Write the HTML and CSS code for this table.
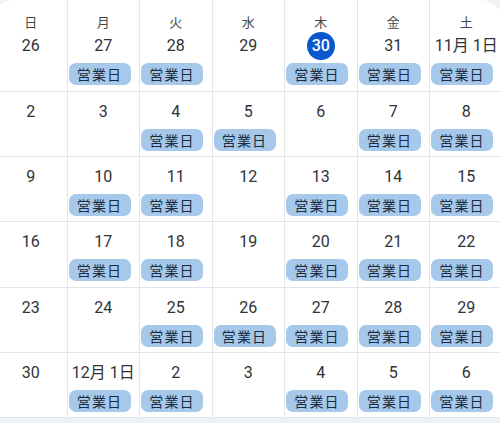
FILE: index.html
```html
<!DOCTYPE html>
<html lang="ja">
<head>
<meta charset="utf-8">
<title>カレンダー</title>
<link rel="stylesheet" href="styles.css">
</head>
<body>
<div class="page">
  <div class="cal">
    <div class="cell head"><span class="dow">日</span><span class="date">26</span></div>
    <div class="cell head"><span class="dow">月</span><span class="date">27</span><span class="ev">営業日</span></div>
    <div class="cell head"><span class="dow">火</span><span class="date">28</span><span class="ev">営業日</span></div>
    <div class="cell head"><span class="dow">水</span><span class="date">29</span></div>
    <div class="cell head"><span class="dow">木</span><span class="date today">30</span><span class="ev">営業日</span></div>
    <div class="cell head"><span class="dow">金</span><span class="date">31</span><span class="ev">営業日</span></div>
    <div class="cell head last"><span class="dow">土</span><span class="date">11月 1日</span><span class="ev">営業日</span></div>

    <div class="cell"><span class="date">2</span></div>
    <div class="cell"><span class="date">3</span></div>
    <div class="cell"><span class="date">4</span><span class="ev">営業日</span></div>
    <div class="cell"><span class="date">5</span><span class="ev">営業日</span></div>
    <div class="cell"><span class="date">6</span></div>
    <div class="cell"><span class="date">7</span><span class="ev">営業日</span></div>
    <div class="cell last"><span class="date">8</span><span class="ev">営業日</span></div>

    <div class="cell"><span class="date">9</span></div>
    <div class="cell"><span class="date">10</span><span class="ev">営業日</span></div>
    <div class="cell"><span class="date">11</span><span class="ev">営業日</span></div>
    <div class="cell"><span class="date">12</span></div>
    <div class="cell"><span class="date">13</span><span class="ev">営業日</span></div>
    <div class="cell"><span class="date">14</span><span class="ev">営業日</span></div>
    <div class="cell last"><span class="date">15</span><span class="ev">営業日</span></div>

    <div class="cell"><span class="date">16</span></div>
    <div class="cell"><span class="date">17</span><span class="ev">営業日</span></div>
    <div class="cell"><span class="date">18</span><span class="ev">営業日</span></div>
    <div class="cell"><span class="date">19</span></div>
    <div class="cell"><span class="date">20</span><span class="ev">営業日</span></div>
    <div class="cell"><span class="date">21</span><span class="ev">営業日</span></div>
    <div class="cell last"><span class="date">22</span><span class="ev">営業日</span></div>

    <div class="cell"><span class="date">23</span></div>
    <div class="cell"><span class="date">24</span></div>
    <div class="cell"><span class="date">25</span><span class="ev">営業日</span></div>
    <div class="cell"><span class="date">26</span><span class="ev">営業日</span></div>
    <div class="cell"><span class="date">27</span><span class="ev">営業日</span></div>
    <div class="cell"><span class="date">28</span><span class="ev">営業日</span></div>
    <div class="cell last"><span class="date">29</span><span class="ev">営業日</span></div>

    <div class="cell"><span class="date">30</span></div>
    <div class="cell"><span class="date">12月 1日</span><span class="ev">営業日</span></div>
    <div class="cell"><span class="date">2</span><span class="ev">営業日</span></div>
    <div class="cell"><span class="date">3</span></div>
    <div class="cell"><span class="date">4</span><span class="ev">営業日</span></div>
    <div class="cell"><span class="date">5</span><span class="ev">営業日</span></div>
    <div class="cell last"><span class="date">6</span><span class="ev">営業日</span></div>
  </div>
</div>
</body>
</html>
```

FILE: styles.css
```css
html, body {
  margin: 0;
  padding: 0;
}
body {
  width: 500px;
  height: 423px;
  overflow: hidden;
  background: #eef1f6;
  font-family: Roboto, "Noto Sans CJK JP", sans-serif;
}
.page {
  width: 500px;
  height: 423px;
  overflow: hidden;
}
.cal {
  margin-left: -5px;
  width: 507.5px;
  display: grid;
  grid-template-columns: repeat(7, 72.5px);
  grid-template-rows: 92px repeat(5, 65.2px);
  background: #ffffff;
  border-radius: 18px 22px 0 0;
}
.cell {
  display: flex;
  flex-direction: column;
  align-items: center;
  border-right: 1px solid #e3e5e8;
  border-bottom: 1px solid #e3e5e8;
  min-width: 0;
}
.cell.last {
  border-right: none;
}
.dow {
  margin-top: 14px;
  height: 16px;
  line-height: 16px;
  font-size: 13px;
  font-weight: 400;
  color: #444746;
  font-family: "Noto Sans CJK JP", sans-serif;
}
.date {
  margin-top: 6px;
  height: 28px;
  line-height: 28px;
  min-width: 28px;
  text-align: center;
  font-size: 16px;
  font-weight: 400;
  color: #303336;
  white-space: nowrap;
  font-family: Roboto, "Noto Sans CJK JP", sans-serif;
}
.head .date {
  margin-top: 2px;
}
.date.today {
  background: #0b57d0;
  color: #ffffff;
  border-radius: 50%;
  width: 28px;
  font-weight: 500;
}
.ev {
  align-self: flex-start;
  margin-top: 3px;
  margin-left: 1px;
  width: 62px;
  height: 22px;
  line-height: 22px;
  border-radius: 7px;
  background: #a6c8ea;
  color: #1b2c40;
  font-size: 14px;
  letter-spacing: 1.2px;
  text-align: center;
  font-family: "Noto Sans CJK JP", sans-serif;
}
```
